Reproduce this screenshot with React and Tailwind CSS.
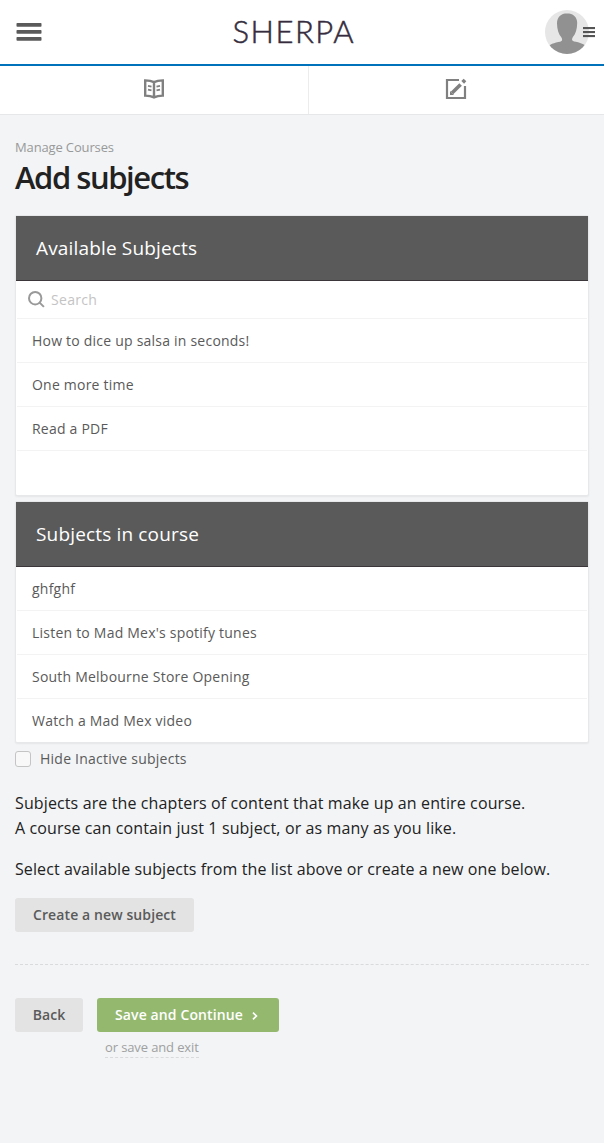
import React from "react";

const available = ["How to dice up salsa in seconds!", "One more time", "Read a PDF"];
const inCourse = [
  "ghfghf",
  "Listen to Mad Mex's spotify tunes",
  "South Melbourne Store Opening",
  "Watch a Mad Mex video",
];

function MenuIcon() {
  return (
    <svg width="26" height="20" viewBox="0 0 26 20" fill="#5a5a5a">
      <rect x="0.5" y="1" width="25" height="3.8" rx="0.8" />
      <rect x="0.5" y="8" width="25" height="3.8" rx="0.8" />
      <rect x="0.5" y="15" width="25" height="3.8" rx="0.8" />
    </svg>
  );
}

function Avatar() {
  return (
    <svg width="52" height="46" viewBox="0 0 52 46">
      <defs>
        <clipPath id="avatar-circle">
          <circle cx="23" cy="23" r="22" />
        </clipPath>
      </defs>
      <circle cx="23" cy="23" r="22" fill="#e6e6e6" />
      <path
        clipPath="url(#avatar-circle)"
        fill="#919191"
        d="M23 4.300c-6 0-10 4.200-10 10 0 6 1.700 11 4.300 14 .7 1 .9 2 .8 3-.2 1.300-3 1.700-6 2.200-3 .8-5 1.700-7.500 3.500V46h37v-9.300c-2.500-1.800-4.500-2.700-7.500-3.500-3-.5-5.800-.9-6-2.200-.1-1 .1-2 .8-3 2.600-3 4.300-8 4.300-14 0-5.800-4.200-9.700-10.200-9.700z"
      />
      <g fill="#555">
        <rect x="39" y="18" width="12" height="2.100" />
        <rect x="39" y="22" width="12" height="2.100" />
        <rect x="39" y="26" width="12" height="2.100" />
      </g>
    </svg>
  );
}

function BookIcon() {
  return (
    <svg width="20" height="20" viewBox="0 0 20 20" fill="none" stroke="#808080">
      <path strokeWidth="2.400" d="M10 3.200C7.500 2 4 1.500 1.200 1.400v15.200c3 .1 6.300.6 8.800 1.800 2.500-1.200 5.800-1.700 8.800-1.800V1.400c-2.800.1-6.300.6-8.800 1.800zM10 3.200v15.300" />
      <path strokeWidth="1.800" d="M4 6.800l3.500.8M4 10.600l3.500.8M16 6.800l-3.500.8M16 10.600l-3.500.8" />
    </svg>
  );
}

function EditIcon() {
  return (
    <svg width="22" height="22" viewBox="0 0 22 22" fill="none">
      <path stroke="#808080" strokeWidth="2.200" d="M14 2H2v18h18V8" />
      <path stroke="#808080" strokeWidth="3.600" d="M7 15L15.600 6.400" />
      <path fill="#808080" d="M5 17v-4l4 4z" />
      <path stroke="#808080" strokeWidth="3.800" d="M17.700 4.300l2.300-2.300" />
    </svg>
  );
}

function SearchIcon() {
  return (
    <svg width="18" height="18" viewBox="0 0 18 18" fill="none" stroke="#999" strokeWidth="2">
      <circle cx="7.200" cy="7.200" r="6.200" />
      <path d="M11.600 11.600l4.300 4.300" />
    </svg>
  );
}

function Panel({ title, children }) {
  return (
    <section className="rounded-[2px] border border-[#e7e8ea] bg-white shadow-[0_1px_2px_rgba(0,0,0,0.06)]">
      <h2 className="h-[65px] border-b border-[#3a363a] bg-[#5a5a5a] pl-5 text-[19px] leading-[64px] tracking-[0.160px] text-white">
        {title}
      </h2>
      {children}
    </section>
  );
}

function Rows({ items, last }) {
  return (
    <ul className="px-px">
      {items.map((item, i) => (
        <li
          key={item}
          className={
            "pl-[15px] text-[14px] leading-[44px] tracking-[0.220px] text-[#5a5a5a] " +
            (last && i === items.length - 1 ? "h-[43px]" : "h-11 border-b border-[#f3f3f4]")
          }
        >
          {item}
        </li>
      ))}
    </ul>
  );
}

export default function App() {
  return (
    <div className="min-h-[1143px] bg-[#f2f4f6] font-['Open_Sans','Noto_Sans',sans-serif] text-[#222]">
      <header className="flex h-[66px] items-center justify-between border-b-2 border-[#0072bc] bg-white pr-2 pl-4">
        <button className="w-[29px]" aria-label="Menu"><MenuIcon /></button>
        <div className="w-[124px] pb-[2px] font-['Lato',sans-serif] text-[31px] leading-[62px] font-light tracking-[1.500px] whitespace-nowrap text-[#352d3d] [-webkit-text-stroke:0.5px_#352d3d]">
          SHERPA
        </div>
        <button aria-label="Account"><Avatar /></button>
      </header>
      <nav className="flex h-[49px] border-b border-[#e6e7e8] bg-white">
        <a className="flex w-[309px] items-center justify-center border-r border-[#ececec] pb-[3px]"><BookIcon /></a>
        <a className="flex flex-1 items-center justify-center pr-px pb-[3px]"><EditIcon /></a>
      </nav>
      <main className="px-[15px] pt-6">
        <p className="h-4 text-[13px] leading-[16px] tracking-[-0.140px] text-[#999]">Manage Courses</p>
        <h1 className="h-[60px] text-[31px] leading-[44px] font-semibold tracking-[-1.450px]">Add subjects</h1>
        <div className="flex flex-col gap-[5px]">
          <Panel title="Available Subjects">
            <label className="mx-px flex h-[38px] items-center gap-[5px] border-b border-[#f3f3f4] pl-[11px]">
              <SearchIcon />
              <input
                className="w-80 text-[14px] tracking-[0.300px] text-[#5a5a5a] outline-none placeholder:text-[#c4c4c4]"
                placeholder="Search"
              />
            </label>
            <Rows items={available} />
            <div className="h-11" />
          </Panel>
          <Panel title="Subjects in course">
            <Rows items={inCourse} last />
          </Panel>
        </div>
        <label className="flex h-8 items-center gap-[9px] pb-px text-[14px] tracking-[0.240px] text-[#5a5a5a]">
          <span className="size-4 rounded-[3px] border border-[#c4c4c4] bg-[#f8f8f8]" />
          Hide Inactive subjects
        </label>
        <p className="pt-4 text-[16px] leading-[25px] tracking-[0.120px]">
          Subjects are the chapters of content that make up an entire course.
          <br />
          A course can contain just 1 subject, or as many as you like.
        </p>
        <p className="pt-4 text-[16px] leading-[25px] tracking-[0.090px]">
          Select available subjects from the list above or create a new one below.
        </p>
        <button className="mt-4 block h-[34px] w-[179px] rounded-[3px] bg-[#e3e3e3] pb-[2px] text-[14px] font-semibold tracking-[0.100px] text-[#5a5a5a]">
          Create a new subject
        </button>
        <div className="mt-8 border-t border-dashed border-[#d9dadb]" />
        <div className="mt-[33px] flex gap-[14px]">
          <button className="h-[34px] w-[68px] rounded-[3px] bg-[#e3e3e3] pb-[2px] text-[14px] font-semibold text-[#5a5a5a]">
            Back
          </button>
          <div>
            <button className="flex h-[34px] w-[182px] items-center gap-[9px] rounded-[3px] bg-[#95b86f] pb-[2px] pl-[18px] text-[14px] font-semibold tracking-[0.120px] whitespace-nowrap text-white">
              Save and Continue
              <svg className="mt-1" width="6" height="8" viewBox="0 0 6 8" fill="none" stroke="white" strokeWidth="1.700">
                <path d="M1 .7L4.400 4 1 7.300" />
              </svg>
            </button>
            <a className="mt-[7px] ml-2 inline-block h-[19px] border-b border-dashed border-[#d9dadb] text-[13px] leading-[17px] tracking-[-0.120px] text-[#a0a0a0]">
              or save and exit
            </a>
          </div>
        </div>
      </main>
    </div>
  );
}
